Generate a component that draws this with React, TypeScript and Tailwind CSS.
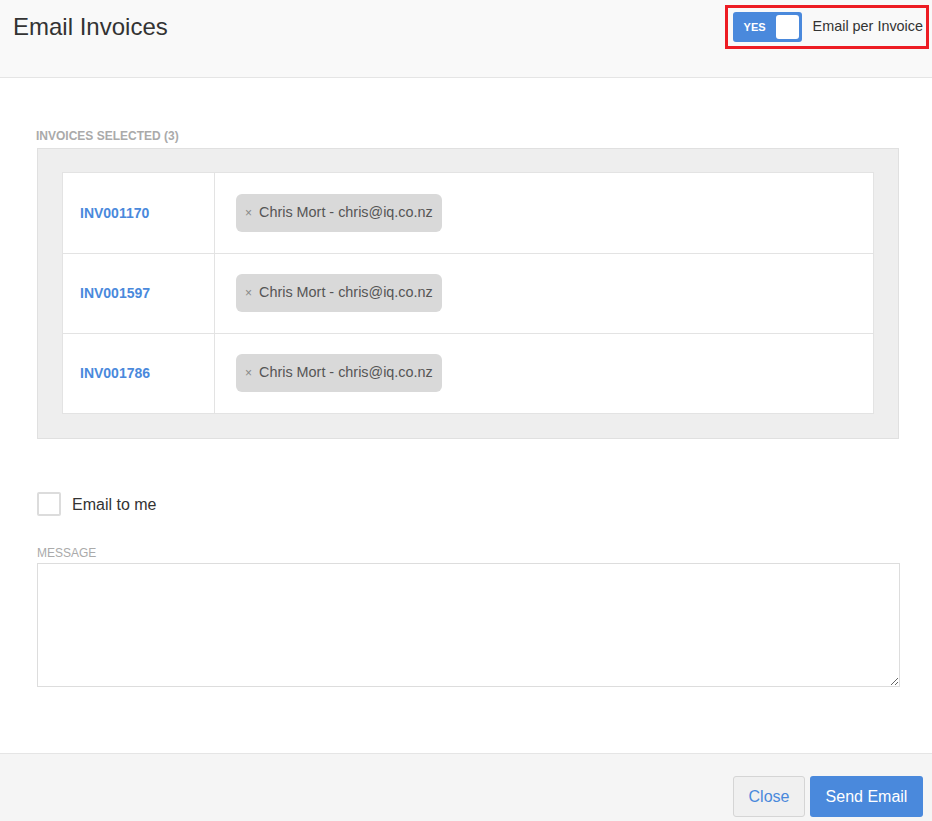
import React from "react";

const rows = ["INV001170", "INV001597", "INV001786"];

export default function App() {
  return (
    <div
      className="w-[932px] h-[821px] flex flex-col bg-white text-[#333]"
      style={{ fontFamily: "'Liberation Sans', Arial, sans-serif" }}
    >
      <div className="h-[78px] shrink-0 bg-[#f9f9f9] border-b border-[#e5e5e5] flex items-start justify-between pl-[13px] pr-[3px]">
        <h1 className="mt-[13px] text-[24px] leading-[28px] text-[#333] font-normal">Email Invoices</h1>
        <div className="mt-[5px] h-[44px] border-[3px] border-[#ed1c24] flex items-center pl-[5px] pr-[3px] gap-[11px]">
          <div className="w-[69px] h-[30px] rounded-[3px] bg-[#4a89dc] flex items-center justify-between pl-[11px] pr-[3px]">
            <span className="text-white text-[11px] font-bold">YES</span>
            <span className="w-[23px] h-[24px] bg-white rounded-[3px]" />
          </div>
          <span className="text-[14.4px] text-[#333]">Email per Invoice</span>
        </div>
      </div>

      <div className="flex-1 pl-[37px] pr-[32px] pt-[51px]">
        <div className="text-[12px] leading-[15px] font-bold text-[#aaa] -ml-px">INVOICES SELECTED (3)</div>
        <div className="mt-[4px] mr-px h-[291px] bg-[#eeeeee] border border-[#e0e0e0] pl-[24px] pr-[24px] pt-[23px]">
          <div className="bg-white border border-[#e3e3e3]">
            {rows.map((r, i) => (
              <div
                key={r}
                className={`flex h-[80px] ${i > 0 ? "border-t border-[#e3e3e3]" : ""}`}
              >
                <div className="w-[152px] border-r border-[#e3e3e3] flex items-center pl-[17px]">
                  <span className="text-[14px] font-bold text-[#4a89dc]">{r}</span>
                </div>
                <div className="flex items-center pl-[21px] -mt-px">
                  <span className="h-[38px] rounded-[6px] bg-[#d9d9d9] flex items-center pl-[9px] pr-[9px] text-[14.4px] text-[#555]">
                    <span className="text-[#888] text-[12px] mr-[7px]">×</span>
                    Chris Mort - chris@iq.co.nz
                  </span>
                </div>
              </div>
            ))}
          </div>
        </div>

        <label className="mt-[53px] h-[24px] flex items-center gap-[11px]">
          <span className="w-[24px] h-[24px] border-2 border-[#dcdcdc] rounded-[2px] bg-white" />
          <span className="text-[16px] leading-[18px] text-[#333] translate-y-[1px]">Email to me</span>
        </label>

        <div className="mt-[30px] text-[12px] leading-[14px] text-[#aaa]">MESSAGE</div>
        <textarea className="mt-[3px] block w-full h-[124px] border border-[#dddddd] bg-white outline-none" />
      </div>

      <div className="h-[68px] shrink-0 bg-[#f5f5f5] border-t border-[#e5e5e5] flex items-start justify-end pt-[22px] pr-[9px] gap-[5px]">
        <button className="h-[41px] w-[72px] rounded-[3px] border border-[#d5d5d5] bg-[#f0f0f0] text-[16px] text-[#4a89dc]">
          Close
        </button>
        <button className="h-[41px] w-[113px] rounded-[3px] bg-[#4a89dc] text-[16px] text-white">
          Send Email
        </button>
      </div>
    </div>
  );
}
